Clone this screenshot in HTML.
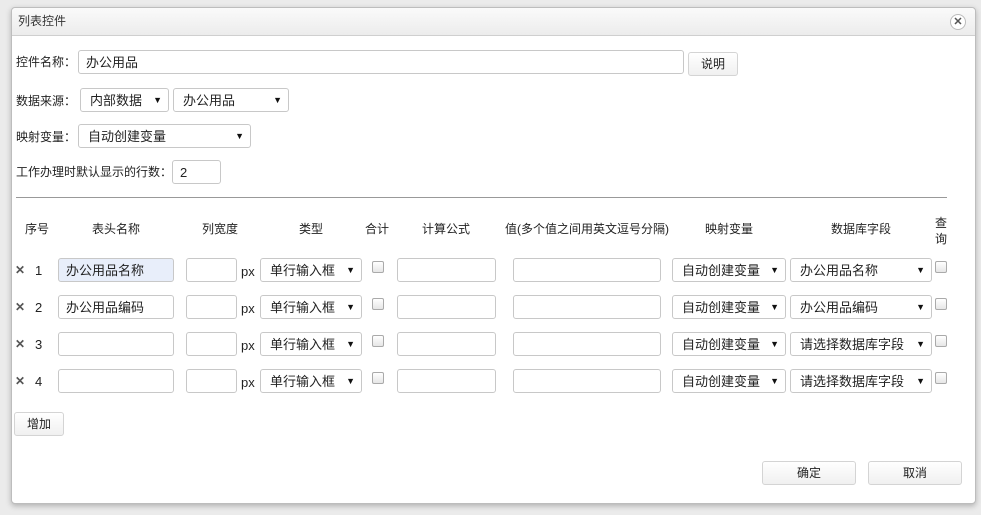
<!DOCTYPE html>
<html><head><meta charset="utf-8"><style>
*{box-sizing:border-box;margin:0;padding:0}
body{width:981px;height:515px;background:#ebebeb;font-family:"Liberation Sans","Noto Sans CJK SC",sans-serif;font-size:13px;color:#222;position:relative;overflow:hidden;line-height:1}
.dlg{position:absolute;left:11px;top:7px;width:965px;height:497px;background:#fff;border:1px solid #bdbdbd;border-radius:4px;box-shadow:0 2px 6px rgba(0,0,0,.25)}
.tb{position:absolute;left:0;top:0;width:100%;height:28px;background:linear-gradient(#fafafa,#ececec);border-bottom:1px solid #cfcfcf;border-radius:4px 4px 0 0}
.tb span{position:absolute;left:6px;top:7px;font-size:12px;color:#333}
.x{position:absolute;right:9px;top:6px;width:16px;height:16px;border:1px solid #bbb;border-radius:50%;background:#fff;display:flex;align-items:center;justify-content:center;font-size:11px;font-weight:bold;color:#555}
.a{position:absolute;white-space:nowrap}
.l{font-size:12px}
.in,.sel,.btn{position:absolute;border:1px solid #c8c8c8;border-radius:3px;background:#fff;height:24px;display:flex;align-items:center;white-space:nowrap}
.in{padding-left:7px}
.sel{padding-left:9px}
.sel:after{content:"▼";position:absolute;right:6px;top:7px;font-size:9px;color:#111}
.btn{border-color:#d4d4d4;background:linear-gradient(#fff,#f0f0f0);justify-content:center;font-size:12px}
.cb{position:absolute;width:12px;height:12px;border:1px solid #aaa;border-radius:2px;background:linear-gradient(#fff,#e6e6e6)}
.h{position:absolute;top:223px;font-size:12px;transform:translateX(-50%);white-space:nowrap}
.xx{position:absolute;font-size:12px;font-weight:bold;color:#555}
</style></head><body>
<div class="dlg"><div class="tb"><span>列表控件</span><div class="x">✕</div></div></div>

<div class="a l" style="left:16px;top:56px">控件名称：</div>
<div class="in" style="left:78px;top:50px;width:606px">办公用品</div>
<div class="btn" style="left:688px;top:52px;width:50px">说明</div>

<div class="a l" style="left:16px;top:95px">数据来源：</div>
<div class="sel" style="left:80px;top:88px;width:89px">内部数据</div>
<div class="sel" style="left:173px;top:88px;width:116px">办公用品</div>

<div class="a l" style="left:16px;top:131px">映射变量：</div>
<div class="sel" style="left:78px;top:124px;width:173px">自动创建变量</div>

<div class="a l" style="left:16px;top:166px">工作办理时默认显示的行数：</div>
<div class="in" style="left:172px;top:160px;width:49px">2</div>

<div class="a" style="left:16px;top:197px;width:931px;border-top:1px solid #999"></div>

<div class="h" style="left:37px">序号</div>
<div class="h" style="left:116px">表头名称</div>
<div class="h" style="left:220px">列宽度</div>
<div class="h" style="left:311px">类型</div>
<div class="h" style="left:377px">合计</div>
<div class="h" style="left:446px">计算公式</div>
<div class="h" style="left:587px">值(多个值之间用英文逗号分隔)</div>
<div class="h" style="left:729px">映射变量</div>
<div class="h" style="left:861px">数据库字段</div>
<div class="a" style="left:935px;top:215px;font-size:12px;line-height:16px">查<br>询</div>

<div class="xx" style="left:15px;top:264px">✕</div><div class="a" style="left:35px;top:264px">1</div>
<div class="in" style="left:58px;top:258px;width:116px;background:#e8eefa">办公用品名称</div>
<div class="in" style="left:186px;top:258px;width:51px"></div><div class="a" style="left:241px;top:265px">px</div>
<div class="sel" style="left:260px;top:258px;width:102px">单行输入框</div>
<div class="cb" style="left:372px;top:261px"></div>
<div class="in" style="left:397px;top:258px;width:99px"></div>
<div class="in" style="left:513px;top:258px;width:148px"></div>
<div class="sel" style="left:672px;top:258px;width:114px">自动创建变量</div>
<div class="sel" style="left:790px;top:258px;width:142px">办公用品名称</div>
<div class="cb" style="left:935px;top:261px"></div>

<div class="xx" style="left:15px;top:301px">✕</div><div class="a" style="left:35px;top:301px">2</div>
<div class="in" style="left:58px;top:295px;width:116px">办公用品编码</div>
<div class="in" style="left:186px;top:295px;width:51px"></div><div class="a" style="left:241px;top:302px">px</div>
<div class="sel" style="left:260px;top:295px;width:102px">单行输入框</div>
<div class="cb" style="left:372px;top:298px"></div>
<div class="in" style="left:397px;top:295px;width:99px"></div>
<div class="in" style="left:513px;top:295px;width:148px"></div>
<div class="sel" style="left:672px;top:295px;width:114px">自动创建变量</div>
<div class="sel" style="left:790px;top:295px;width:142px">办公用品编码</div>
<div class="cb" style="left:935px;top:298px"></div>

<div class="xx" style="left:15px;top:338px">✕</div><div class="a" style="left:35px;top:338px">3</div>
<div class="in" style="left:58px;top:332px;width:116px"></div>
<div class="in" style="left:186px;top:332px;width:51px"></div><div class="a" style="left:241px;top:339px">px</div>
<div class="sel" style="left:260px;top:332px;width:102px">单行输入框</div>
<div class="cb" style="left:372px;top:335px"></div>
<div class="in" style="left:397px;top:332px;width:99px"></div>
<div class="in" style="left:513px;top:332px;width:148px"></div>
<div class="sel" style="left:672px;top:332px;width:114px">自动创建变量</div>
<div class="sel" style="left:790px;top:332px;width:142px">请选择数据库字段</div>
<div class="cb" style="left:935px;top:335px"></div>

<div class="xx" style="left:15px;top:375px">✕</div><div class="a" style="left:35px;top:375px">4</div>
<div class="in" style="left:58px;top:369px;width:116px"></div>
<div class="in" style="left:186px;top:369px;width:51px"></div><div class="a" style="left:241px;top:376px">px</div>
<div class="sel" style="left:260px;top:369px;width:102px">单行输入框</div>
<div class="cb" style="left:372px;top:372px"></div>
<div class="in" style="left:397px;top:369px;width:99px"></div>
<div class="in" style="left:513px;top:369px;width:148px"></div>
<div class="sel" style="left:672px;top:369px;width:114px">自动创建变量</div>
<div class="sel" style="left:790px;top:369px;width:142px">请选择数据库字段</div>
<div class="cb" style="left:935px;top:372px"></div>

<div class="btn" style="left:14px;top:412px;width:50px">增加</div>
<div class="btn" style="left:762px;top:461px;width:94px">确定</div>
<div class="btn" style="left:868px;top:461px;width:94px">取消</div>
</body></html>
